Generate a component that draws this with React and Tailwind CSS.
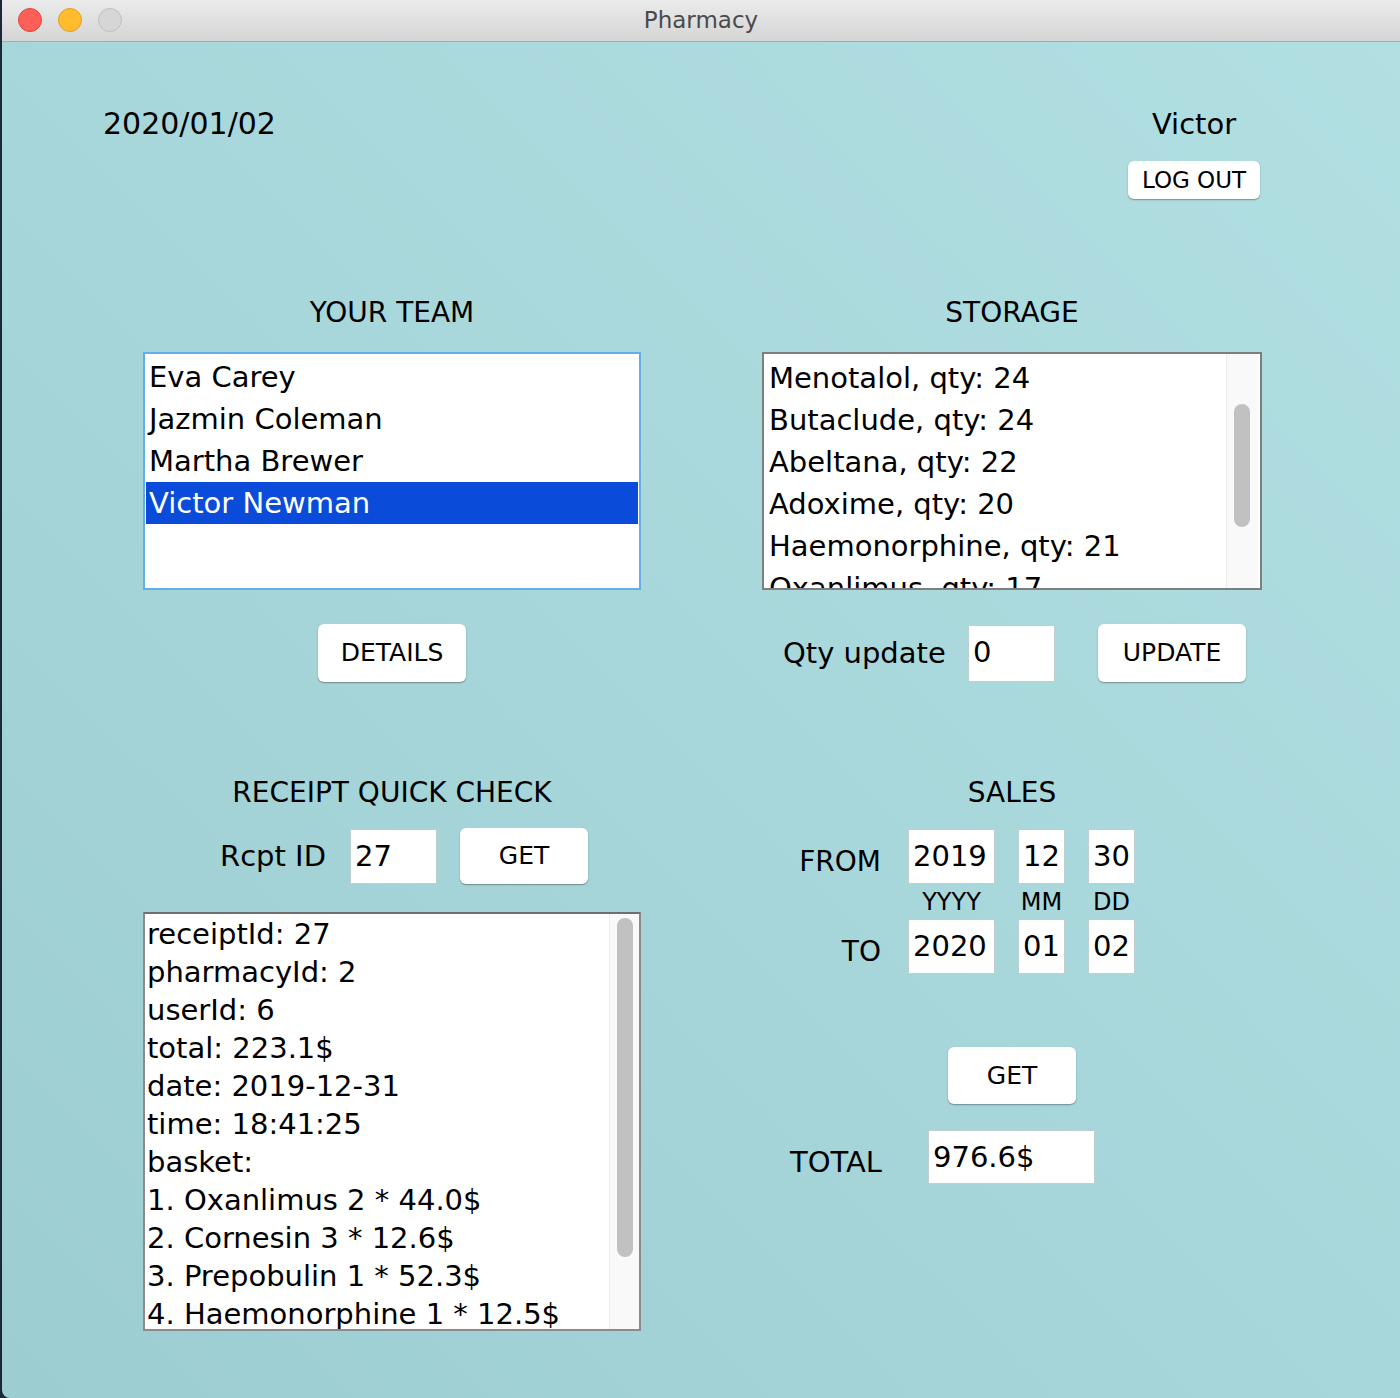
import React from "react";

const F = { fontFamily: '"DejaVu Sans", "Noto Sans", sans-serif' };

function Btn({ children, className = "" }) {
  return (
    <div
      className={
        "flex items-center justify-center bg-white rounded-[6px] shadow-[0_1px_1.5px_rgba(0,0,0,0.35)] text-black " +
        className
      }
    >
      {children}
    </div>
  );
}

function Field({ children, className = "" }) {
  return (
    <div
      className={
        "bg-white border border-[#bfcfd1] text-[29px] leading-none text-black pl-[4px] flex items-start pt-[12px] " +
        className
      }
    >
      {children}
    </div>
  );
}

export default function App() {
  const team = ["Eva Carey", "Jazmin Coleman", "Martha Brewer", "Victor Newman"];
  const storage = [
    "Menotalol, qty: 24",
    "Butaclude, qty: 24",
    "Abeltana, qty: 22",
    "Adoxime, qty: 20",
    "Haemonorphine, qty: 21",
    "Oxanlimus, qty: 17",
  ];
  const receipt = [
    "receiptId: 27",
    "pharmacyId: 2",
    "userId: 6",
    "total: 223.1$",
    "date: 2019-12-31",
    "time: 18:41:25",
    "basket:",
    "1. Oxanlimus 2 * 44.0$",
    "2. Cornesin 3 * 12.6$",
    "3. Prepobulin 1 * 52.3$",
    "4. Haemonorphine 1 * 12.5$",
  ];
  return (
    <div className="w-[1400px] h-[1398px] overflow-hidden bg-[#1b2837] text-black" style={F}>
      <div className="ml-[2px] h-full flex flex-col rounded-bl-[8px] overflow-hidden bg-linear-to-bl from-[#b1dfe2] via-[#a8d7db] to-[#9ccdd1]">
        {/* title bar */}
        <div className="h-[42px] shrink-0 relative flex items-center justify-center bg-linear-to-b from-[#ebebeb] to-[#d5d5d5] border-b border-[#a9a9a9]">
          <div className="absolute left-[16px] top-[8px] flex gap-[16px]">
            <div className="w-[24px] h-[24px] rounded-full bg-[#fe5f57] border border-[#e2463f]" />
            <div className="w-[24px] h-[24px] rounded-full bg-[#febc2e] border border-[#dfa023]" />
            <div className="w-[24px] h-[24px] rounded-full bg-[#d6d6d6] border border-[#c0c0c0]" />
          </div>
          <span className="text-[23px] text-[#4a4a4a]">Pharmacy</span>
        </div>

        {/* header */}
        <div className="flex justify-between pl-[101px] pr-[140px] pt-[61px]">
          <div className="h-[40px] flex items-center text-[30px]">2020/01/02</div>
          <div className="flex flex-col items-center w-[132px]">
            <div className="h-[40px] flex items-center text-[29px] pt-[3px]">Victor</div>
            <Btn className="mt-[18px] w-[132px] h-[38px] text-[23px]">LOG OUT</Btn>
          </div>
        </div>

        {/* columns */}
        <div className="flex pl-[141px] mt-[94px] gap-[121px]">
          {/* left column */}
          <div className="w-[498px] flex flex-col">
            <div className="h-[40px] flex items-center justify-center text-[28px]">YOUR TEAM</div>
            <div className="mt-[19px] h-[238px] bg-white border-2 border-[#63aee9] px-[1px] pt-[2px]">
              {team.map((t, i) => (
                <div
                  key={t}
                  className={
                    "h-[42px] flex items-center pl-[3px] text-[29px] pt-[2px] " +
                    (i === 3 ? "bg-[#0a4cd9] text-white" : "")
                  }
                >
                  {t}
                </div>
              ))}
            </div>
            <div className="flex justify-center mt-[34px]">
              <Btn className="w-[148px] h-[58px] text-[25px]">DETAILS</Btn>
            </div>
            <div className="h-[40px] mt-[91px] flex items-center justify-center text-[28px]">RECEIPT QUICK CHECK</div>
            <div className="flex items-center mt-[15px] h-[56px]">
              <div className="w-[207px] text-right pr-[24px] text-[29px] pt-[2px]">Rcpt ID</div>
              <Field className="w-[87px] h-[55px]">27</Field>
              <Btn className="ml-[23px] w-[128px] h-[56px] text-[25px]">GET</Btn>
            </div>
            <div className="mt-[28px] h-[419px] bg-white border-2 border-[#8b8b8b] border-t-[#6f6f6f] flex overflow-hidden">
              <div className="flex-1 pl-[2px] pt-[2px] overflow-hidden">
                {receipt.map((r) => (
                  <div key={r} className="h-[38px] flex items-center text-[29px] whitespace-nowrap">
                    {r}
                  </div>
                ))}
              </div>
              <div className="w-[30px] bg-[#f9f9f9] border-l border-[#ececec] pl-[7px] pt-[4px]">
                <div className="w-[16px] h-[339px] rounded-full bg-[#c1c1c1]" />
              </div>
            </div>
          </div>

          {/* right column */}
          <div className="w-[500px] flex flex-col">
            <div className="h-[40px] flex items-center justify-center text-[28px]">STORAGE</div>
            <div className="mt-[19px] h-[238px] bg-white border-2 border-[#7e7e7e] flex overflow-hidden">
              <div className="flex-1 pl-[5px] pt-[4px] overflow-hidden">
                {storage.map((s) => (
                  <div key={s} className="h-[42px] shrink-0 flex items-center text-[29px] whitespace-nowrap">
                    {s}
                  </div>
                ))}
              </div>
              <div className="w-[32px] bg-[#f9f9f9] border-l border-[#ececec] pl-[7px] pt-[50px] mr-[2px]">
                <div className="w-[16px] h-[123px] rounded-full bg-[#c1c1c1]" />
              </div>
            </div>
            <div className="flex items-center mt-[34px] h-[58px]">
              <div className="w-[206px] pl-[21px] text-[29px] pt-[2px]">Qty update</div>
              <Field className="w-[87px] h-[57px]">0</Field>
              <Btn className="ml-[43px] w-[148px] h-[58px] text-[25px]">UPDATE</Btn>
            </div>
            <div className="h-[40px] mt-[91px] flex items-center justify-center text-[28px]">SALES</div>
            <div className="flex items-center mt-[16px] h-[55px]">
              <div className="w-[146px] text-right pr-[27px] text-[28px] pt-[10px]">FROM</div>
              <Field className="w-[87px] h-[55px]">2019</Field>
              <Field className="ml-[23px] w-[47px] h-[55px]">12</Field>
              <Field className="ml-[23px] w-[47px] h-[55px]">30</Field>
            </div>
            <div className="flex h-[35px] items-center text-[24px]">
              <div className="w-[146px]" />
              <div className="w-[87px] text-center">YYYY</div>
              <div className="ml-[23px] w-[47px] text-center">MM</div>
              <div className="ml-[23px] w-[47px] text-center">DD</div>
            </div>
            <div className="flex items-center h-[55px]">
              <div className="w-[146px] text-right pr-[27px] text-[28px] pt-[10px]">TO</div>
              <Field className="w-[87px] h-[55px]">2020</Field>
              <Field className="ml-[23px] w-[47px] h-[55px]">01</Field>
              <Field className="ml-[23px] w-[47px] h-[55px]">02</Field>
            </div>
            <div className="flex mt-[73px] pl-[186px]">
              <Btn className="w-[128px] h-[57px] text-[25px]">GET</Btn>
            </div>
            <div className="flex items-center mt-[26px] h-[54px]">
              <div className="w-[166px] text-right pr-[46px] text-[29px] pt-[12px]">TOTAL</div>
              <Field className="w-[167px] h-[54px]">976.6$</Field>
            </div>
          </div>
        </div>
      </div>
    </div>
  );
}
